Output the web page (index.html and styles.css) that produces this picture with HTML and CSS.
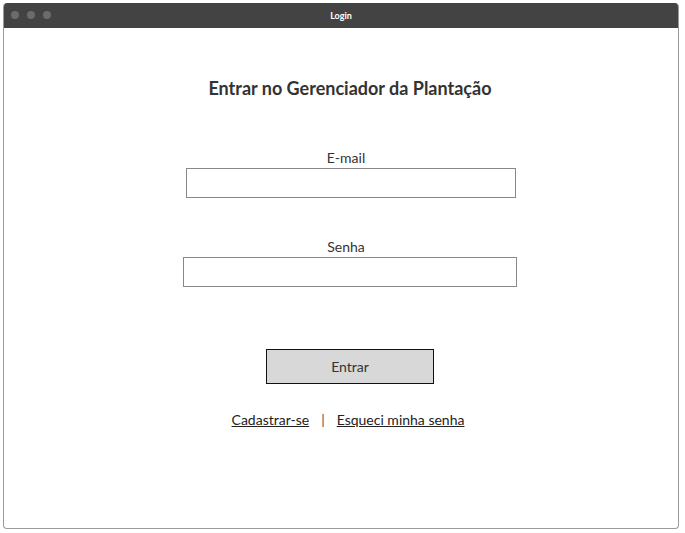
FILE: index.html
```html
<!DOCTYPE html>
<html lang="pt">
<head>
<meta charset="utf-8">
<title>Login</title>
<link rel="stylesheet" href="styles.css">
</head>
<body>
<div class="window">
  <div class="titlebar">
    <div class="dots"><span class="dot"></span><span class="dot"></span><span class="dot"></span></div>
    <div class="wintitle">Login</div>
  </div>
  <div class="content">
    <h1 class="heading">Entrar no Gerenciador da Plantação</h1>
    <div class="field field-email">
      <label class="label">E-mail</label>
      <div class="input input-email"></div>
    </div>
    <div class="field field-pass">
      <label class="label">Senha</label>
      <div class="input input-pass"></div>
    </div>
    <div class="button">Entrar</div>
    <div class="links">
      <a class="link">Cadastrar-se</a>
      <span class="sep">|</span>
      <a class="link">Esqueci minha senha</a>
    </div>
  </div>
</div>
</body>
</html>
```
FILE: styles.css
```css
html, body { margin: 0; padding: 0; background: #fff; }
body { font-family: "Lato", "Open Sans", sans-serif; color: #333; }
.window {
  margin: 3px 0 0 3px;
  width: 676px;
  height: 526px;
  border: 1px solid #9a9a9a;
  border-top: none;
  border-radius: 4px;
  box-sizing: border-box;
  overflow: hidden;
  display: flex;
  flex-direction: column;
}
.titlebar {
  height: 25px;
  background: #434343;
  position: relative;
  display: flex;
  align-items: center;
  justify-content: center;
  flex: none;
}
.dots { position: absolute; left: 7px; top: 8px; display: flex; gap: 8px; }
.dot { width: 8px; height: 8px; border-radius: 50%; background: #6b6b6b; }
.wintitle { color: #fff; font-size: 9px; font-weight: 700; }
.content {
  display: flex;
  flex-direction: column;
  align-items: center;
  padding-top: 48px;
  padding-left: 18px;
}
.heading {
  margin: 0;
  font-size: 18px;
  line-height: 24px;
  font-weight: 700;
  color: #333;
}
.field { display: flex; flex-direction: column; align-items: center; }
.field-email { margin-top: 48px; }
.field-pass { margin-top: 39px; }
.label { font-size: 14px; line-height: 20px; color: #333; margin-left: -8px; }
.input { height: 30px; border: 1px solid #888; box-sizing: border-box; background: #fff; }
.input-email { width: 330px; margin-left: 2px; }
.input-pass { width: 334px; }
.button {
  margin-top: 62px;
  width: 168px;
  height: 35px;
  box-sizing: border-box;
  border: 1px solid #111;
  background: #d8d8d8;
  display: flex;
  align-items: center;
  justify-content: center;
  font-size: 14px;
  color: #333;
}
.links {
  margin-top: 26px;
  display: flex;
  gap: 12px;
  font-size: 14px;
  line-height: 20px;
  color: #222;
  margin-left: -4px;
}
.link { text-decoration: underline; color: #222; }
.sep { color: #555; }
```
